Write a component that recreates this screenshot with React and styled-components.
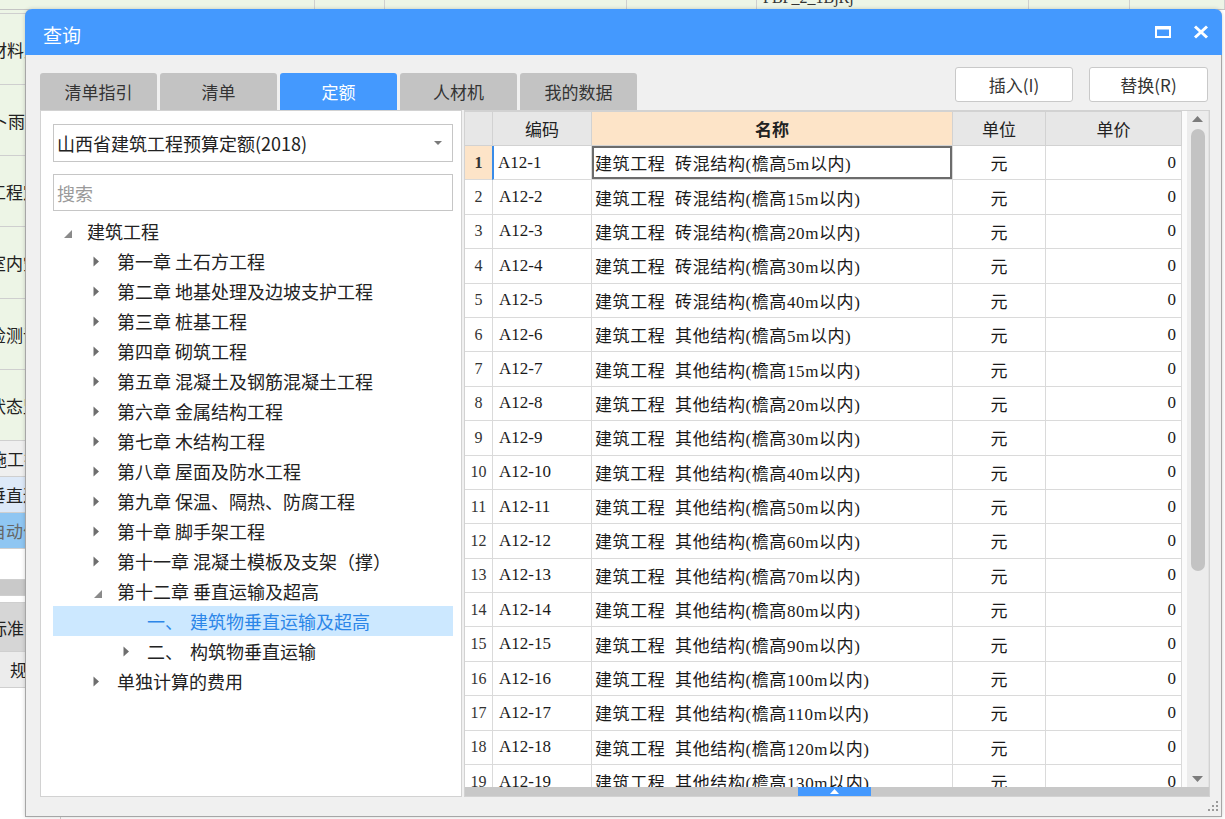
import React from 'react';
import styled, { createGlobalStyle } from 'styled-components';

const GlobalStyle = createGlobalStyle`
  html, body {
    margin: 0;
    padding: 0;
  }
  body {
    font-family: "Noto Sans CJK SC", "Noto Sans", sans-serif;
    background: #ffffff;
    color: #222;
  }
`;

const Screen = styled.div`
  position: relative;
  width: 1225px;
  height: 819px;
  overflow: hidden;
  background: #ffffff;
`;

// the spreadsheet that sits behind the dialog
const Sheet = styled.div`
  display: flex;
  flex-direction: column;
  height: 100%;
`;

const SheetTop = styled.div`
  display: flex;
  height: 9px;
  background: #edf5e6;
  border-bottom: 1px solid #c4c4c4;
`;

const SheetTopCell = styled.div`
  width: ${(p) => p.$w}px;
  flex: ${(p) => (p.$w ? 'none' : '1')};
  border-right: 1px solid #cfcfcf;
  overflow: hidden;
  position: relative;
`;

const SheetTopText = styled.span`
  display: block;
  margin-top: -11px;
  margin-left: 6px;
  font-family: "Liberation Serif", serif;
  font-size: 16px;
  color: #333;
`;

const SheetBody = styled.div`
  display: flex;
  flex: 1;
`;

const SheetCol = styled.div`
  width: 60px;
  display: flex;
  flex-direction: column;
  border-right: 1px solid #cfcfcf;
`;

const SheetCell = styled.div`
  height: ${(p) => p.$h}px;
  flex: none;
  background: ${(p) => p.$bg || '#edf5e6'};
  border-bottom: 1px solid #cfcfcf;
  display: flex;
  align-items: center;
  overflow: hidden;
  white-space: nowrap;
  font-size: 17px;
  color: ${(p) => p.$color || '#222'};
`;

const SheetText = styled.span`
  margin-left: ${(p) => p.$shift}px;
`;

const SheetRest = styled.div`
  flex: 1;
  background: #ffffff;
`;

// dialog
const Dialog = styled.div`
  position: absolute;
  left: 25px;
  top: 9px;
  width: 1197px;
  height: 808px;
  box-sizing: border-box;
  display: flex;
  flex-direction: column;
  background: #f0f0f0;
  border: 1px solid #a6a6a6;
  border-top: none;
  border-radius: 7px 7px 0 0;
  box-shadow: 0 0 4px rgba(0, 0, 0, 0.18);
`;

const TitleBar = styled.div`
  height: 46px;
  flex: none;
  display: flex;
  align-items: center;
  padding: 0 13px 0 18px;
  margin: 0 -1px;
  background: #4499fe;
  border-radius: 7px 7px 0 0;
`;

const Title = styled.div`
  flex: 1;
  padding-top: 4px;
  font-size: 19px;
  color: #ffffff;
`;

const TitleIcon = styled.button`
  border: none;
  background: none;
  padding: 0;
  margin-left: ${(p) => p.$gap || 0}px;
  display: flex;
  align-items: center;
  cursor: pointer;
`;

const Body = styled.div`
  flex: 1;
  display: flex;
  flex-direction: column;
  padding: 12px 11px 0 14px;
  min-height: 0;
`;

const TopRow = styled.div`
  height: 43px;
  flex: none;
  display: flex;
  justify-content: space-between;
  align-items: flex-end;
`;

const Tabs = styled.div`
  display: flex;
  gap: 3px;
`;

const Tab = styled.div`
  width: 117px;
  height: 37px;
  display: flex;
  align-items: center;
  justify-content: center;
  border-radius: 3px 3px 0 0;
  background: ${(p) => (p.$active ? '#4499fe' : '#c3c3c3')};
  color: ${(p) => (p.$active ? '#ffffff' : '#333')};
  font-size: 17px;
`;

const Buttons = styled.div`
  display: flex;
  gap: 16px;
  margin: 0 2px 8px 0;
`;

const Button = styled.button`
  width: ${(p) => p.$w}px;
  height: 35px;
  background: #ffffff;
  border: 1px solid #c9c9c9;
  border-radius: 3px;
  font-family: inherit;
  font-size: 17px;
  color: #333;
  padding: 0;
`;

const Panel = styled.div`
  flex: 1;
  display: flex;
  gap: 2px;
  min-height: 0;
`;

const LeftPane = styled.div`
  width: 422px;
  box-sizing: border-box;
  background: #ffffff;
  border: 1px solid #d2d2d2;
  padding: 13px 8px 0 12px;
  display: flex;
  flex-direction: column;
`;

const Select = styled.div`
  height: 38px;
  box-sizing: border-box;
  border: 1px solid #c6c6c6;
  display: flex;
  align-items: center;
  padding: 0 10px 0 3px;
  font-size: 18px;
  color: #222;
`;

const SelectText = styled.span`
  flex: 1;
`;

const Caret = styled.span`
  width: 0;
  height: 0;
  border-left: 4px solid transparent;
  border-right: 4px solid transparent;
  border-top: 4px solid #7a7a7a;
`;

const Search = styled.div`
  height: 37px;
  box-sizing: border-box;
  margin-top: 12px;
  border: 1px solid #c6c6c6;
  display: flex;
  align-items: center;
  padding-left: 3px;
  font-size: 18px;
  color: #9a9a9a;
`;

const Tree = styled.div`
  margin-top: 5px;
  display: flex;
  flex-direction: column;
`;

const TreeRow = styled.div`
  height: 30px;
  display: flex;
  align-items: center;
  padding-left: ${(p) => 4 + p.$level * 30}px;
  background: ${(p) => (p.$selected ? '#cce8ff' : 'transparent')};
  color: ${(p) => (p.$selected ? '#2c86e8' : '#222')};
  font-size: 18px;
  white-space: nowrap;
`;

const Toggle = styled.span`
  width: 30px;
  flex: none;
  box-sizing: border-box;
  padding-left: 6px;
  display: flex;
  align-items: center;
`;

const Ordinal = styled.span`
  margin-right: 7px;
`;

const RightPane = styled.div`
  flex: 1;
  box-sizing: border-box;
  background: #ffffff;
  border: 1px solid #d2d2d2;
  display: flex;
  flex-direction: column;
  min-width: 0;
`;

const GridArea = styled.div`
  flex: 1;
  display: flex;
  min-height: 0;
`;

const Table = styled.div`
  width: 717px;
  overflow: hidden;
  display: flex;
  flex-direction: column;
`;

const COLS = '28px 99px 361px 93px 136px';

const HeadRow = styled.div`
  display: grid;
  grid-template-columns: ${COLS};
  height: 35px;
  flex: none;
`;

const HeadCell = styled.div`
  display: flex;
  align-items: center;
  justify-content: center;
  border-right: 1px solid #d2d2d2;
  border-bottom: 1px solid #d2d2d2;
  border-top: 1px solid #d2d2d2;
  background: ${(p) => (p.$hot ? '#fde4c8' : '#e7e7e7')};
  font-size: 17px;
  font-weight: ${(p) => (p.$hot ? 700 : 400)};
  color: #222;
`;

const DataRow = styled.div`
  display: grid;
  grid-template-columns: ${COLS};
  height: 34.4px;
  flex: none;
`;

const Cell = styled.div`
  box-sizing: border-box;
  display: flex;
  align-items: center;
  justify-content: ${(p) => p.$align || 'flex-start'};
  padding: ${(p) => p.$pad || '0'};
  border-right: 1px solid #dadada;
  border-bottom: 1px solid #dadada;
  font-family: "Liberation Serif", "Noto Sans CJK SC", serif;
  font-size: 17px;
  color: #1a1a1a;
  white-space: pre;
  overflow: hidden;
`;

const NumCell = styled(Cell)`
  justify-content: center;
  font-size: 16px;
  color: #333;
  background: ${(p) => (p.$current ? '#fde4c8' : '#ffffff')};
  font-weight: ${(p) => (p.$current ? 700 : 400)};
`;

const CodeCell = styled(Cell)`
  border-left: ${(p) => (p.$current ? '2px solid #3a8ce8' : 'none')};
  padding-left: ${(p) => (p.$current ? 4 : 6)}px;
  margin-left: ${(p) => (p.$current ? -1 : 0)}px;
`;

const NameCell = styled(Cell)`
  padding-left: 3px;
  letter-spacing: 0.6px;
  box-shadow: ${(p) => (p.$current ? 'inset 0 0 0 2px #6c6c6c' : 'none')};
`;

const VScroll = styled.div`
  flex: 1;
  display: flex;
  flex-direction: column;
  align-items: center;
  background: #ececec;
  border-left: 5px solid #fbfbfb;
  border-right: 1px solid #e2e2e2;
`;

const ScrollArrow = styled.div`
  height: 16px;
  flex: none;
  display: flex;
  align-items: center;
  justify-content: center;
`;

const Thumb = styled.div`
  width: 14px;
  height: 442px;
  margin-top: 2px;
  border-radius: 7px;
  background: #c3c3c3;
`;

const ScrollSpacer = styled.div`
  flex: 1;
`;

const HScroll = styled.div`
  height: 9px;
  flex: none;
  background: #c8c8c8;
  display: flex;
`;

const Splitter = styled.div`
  width: 73px;
  margin-left: 333px;
  background: #4499fe;
  display: flex;
  align-items: center;
  justify-content: center;
`;

const Footer = styled.div`
  height: 19px;
  flex: none;
  display: flex;
  justify-content: flex-end;
  align-items: flex-end;
  padding: 0 0 4px 0;
  box-sizing: border-box;
  margin-right: -9px;
`;

const sheetTop = [314, 69, 241, 129, 271, 100, 0];

const sheetRows = [
  { h: 3 },
  { h: 70, text: '材料费', shift: -10 },
  { h: 70, text: '卜雨季', shift: -9 },
  { h: 70, text: '工程定', shift: -11 },
  { h: 71, text: '室内空', shift: -11 },
  { h: 70, text: '检测试', shift: -11 },
  { h: 70, text: '状态监', shift: -11 },
  { h: 35, text: '施工排', shift: -10, bg: '#efefef' },
  { h: 35, text: '垂直运', shift: -11, bg: '#dde9f8' },
  { h: 35, text: '自动化', shift: -11, bg: '#8fc6f2', color: '#666' },
  { h: 30, bg: '#ffffff' },
  { h: 15, bg: '#c9c9c9' },
  { h: 6, bg: '#ffffff' },
  { h: 48, text: '标准', shift: -10, bg: '#d6d6d6' },
  { h: 35, text: '规', shift: 10, bg: '#ececec' },
];

const tree = [
  { level: 0, label: '建筑工程', toggle: 'open' },
  { level: 1, label: '第一章 土石方工程', toggle: 'closed' },
  { level: 1, label: '第二章 地基处理及边坡支护工程', toggle: 'closed' },
  { level: 1, label: '第三章 桩基工程', toggle: 'closed' },
  { level: 1, label: '第四章 砌筑工程', toggle: 'closed' },
  { level: 1, label: '第五章 混凝土及钢筋混凝土工程', toggle: 'closed' },
  { level: 1, label: '第六章 金属结构工程', toggle: 'closed' },
  { level: 1, label: '第七章 木结构工程', toggle: 'closed' },
  { level: 1, label: '第八章 屋面及防水工程', toggle: 'closed' },
  { level: 1, label: '第九章 保温、隔热、防腐工程', toggle: 'closed' },
  { level: 1, label: '第十章 脚手架工程', toggle: 'closed' },
  { level: 1, label: '第十一章 混凝土模板及支架（撑）', toggle: 'closed' },
  { level: 1, label: '第十二章 垂直运输及超高', toggle: 'open' },
  { level: 2, ordinal: '一、', label: '建筑物垂直运输及超高', selected: true },
  { level: 2, ordinal: '二、', label: '构筑物垂直运输', toggle: 'closed' },
  { level: 1, label: '单独计算的费用', toggle: 'closed' },
];

const heights = ['5', '15', '20', '30', '40'];
const others = ['5', '15', '20', '30', '40', '50', '60', '70', '80', '90', '100', '110', '120', '130'];
const rows = [
  ...heights.map((h) => `砖混结构(檐高${h}m以内)`),
  ...others.map((h) => `其他结构(檐高${h}m以内)`),
].map((name, i) => ({ no: i + 1, code: `A12-${i + 1}`, name: `建筑工程  ${name}` }));

const TreeToggle = ({ kind }) => {
  if (kind === 'open') {
    return (
      <svg width="10" height="10" viewBox="0 0 10 10" style={{ marginTop: 5 }}>
        <path d="M9 1 L9 9 L1 9 Z" fill="#8a8a8a" />
      </svg>
    );
  }
  if (kind === 'closed') {
    return (
      <svg width="7" height="11" viewBox="0 0 7 11">
        <path d="M0.5 0.5 L6 5.5 L0.5 10.5 Z" fill="#6e6e6e" />
      </svg>
    );
  }
  return null;
};

export default function App() {
  return (
    <Screen>
      <GlobalStyle />
      <Sheet>
        <SheetTop>
          {sheetTop.map((w, i) => (
            <SheetTopCell key={i} $w={w}>
              {i === 4 && <SheetTopText>FBF_2_1BjRj</SheetTopText>}
            </SheetTopCell>
          ))}
        </SheetTop>
        <SheetBody>
          <SheetCol>
            {sheetRows.map((r, i) => (
              <SheetCell key={i} $h={r.h} $bg={r.bg} $color={r.color}>
                {r.text && <SheetText $shift={r.shift}>{r.text}</SheetText>}
              </SheetCell>
            ))}
            <SheetRest />
          </SheetCol>
          <SheetRest />
        </SheetBody>
      </Sheet>

      <Dialog>
        <TitleBar>
          <Title>查询</Title>
          <TitleIcon aria-label="maximize">
            <svg width="16" height="12" viewBox="0 0 16 12">
              <rect x="1" y="1.5" width="14" height="9.5" fill="none" stroke="#fff" strokeWidth="2" />
              <rect x="0" y="0" width="16" height="3.5" fill="#fff" />
            </svg>
          </TitleIcon>
          <TitleIcon aria-label="close" $gap={22}>
            <svg width="16" height="14" viewBox="0 0 16 14">
              <path d="M2 1.5 L14 12.5 M14 1.5 L2 12.5" stroke="#fff" strokeWidth="3" />
            </svg>
          </TitleIcon>
        </TitleBar>

        <Body>
          <TopRow>
            <Tabs>
              <Tab>清单指引</Tab>
              <Tab>清单</Tab>
              <Tab $active>定额</Tab>
              <Tab>人材机</Tab>
              <Tab>我的数据</Tab>
            </Tabs>
            <Buttons>
              <Button $w={118}>插入(I)</Button>
              <Button $w={119}>替换(R)</Button>
            </Buttons>
          </TopRow>

          <Panel>
            <LeftPane>
              <Select>
                <SelectText>山西省建筑工程预算定额(2018)</SelectText>
                <Caret />
              </Select>
              <Search>搜索</Search>
              <Tree>
                {tree.map((t, i) => (
                  <TreeRow key={i} $level={t.level} $selected={t.selected}>
                    <Toggle>
                      <TreeToggle kind={t.toggle} />
                    </Toggle>
                    {t.ordinal && <Ordinal>{t.ordinal}</Ordinal>}
                    {t.label}
                  </TreeRow>
                ))}
              </Tree>
            </LeftPane>

            <RightPane>
              <GridArea>
                <Table>
                  <HeadRow>
                    <HeadCell />
                    <HeadCell>编码</HeadCell>
                    <HeadCell $hot>名称</HeadCell>
                    <HeadCell>单位</HeadCell>
                    <HeadCell>单价</HeadCell>
                  </HeadRow>
                  {rows.map((r) => {
                    const current = r.no === 1;
                    return (
                      <DataRow key={r.no}>
                        <NumCell $current={current}>{r.no}</NumCell>
                        <CodeCell $current={current}>{r.code}</CodeCell>
                        <NameCell $current={current}>{r.name}</NameCell>
                        <Cell $align="center">元</Cell>
                        <Cell $align="flex-end" $pad="0 5px 0 0">0</Cell>
                      </DataRow>
                    );
                  })}
                </Table>
                <VScroll>
                  <ScrollArrow>
                    <svg width="11" height="6" viewBox="0 0 11 6">
                      <path d="M0 6 L5.5 0 L11 6 Z" fill="#7c7c7c" />
                    </svg>
                  </ScrollArrow>
                  <Thumb />
                  <ScrollSpacer />
                  <ScrollArrow>
                    <svg width="11" height="6" viewBox="0 0 11 6">
                      <path d="M0 0 L5.5 6 L11 0 Z" fill="#7c7c7c" />
                    </svg>
                  </ScrollArrow>
                </VScroll>
              </GridArea>
              <HScroll>
                <Splitter>
                  <svg width="9" height="5" viewBox="0 0 9 5">
                    <path d="M0 5 L4.5 0 L9 5 Z" fill="#ffffff" />
                  </svg>
                </Splitter>
              </HScroll>
            </RightPane>
          </Panel>

          <Footer>
            <svg width="12" height="12" viewBox="0 0 12 12">
              <rect x="9" y="1" width="2" height="2" fill="#9a9a9a" />
              <rect x="5" y="5" width="2" height="2" fill="#9a9a9a" />
              <rect x="9" y="5" width="2" height="2" fill="#9a9a9a" />
              <rect x="1" y="9" width="2" height="2" fill="#9a9a9a" />
              <rect x="5" y="9" width="2" height="2" fill="#9a9a9a" />
              <rect x="9" y="9" width="2" height="2" fill="#9a9a9a" />
            </svg>
          </Footer>
        </Body>
      </Dialog>
    </Screen>
  );
}
